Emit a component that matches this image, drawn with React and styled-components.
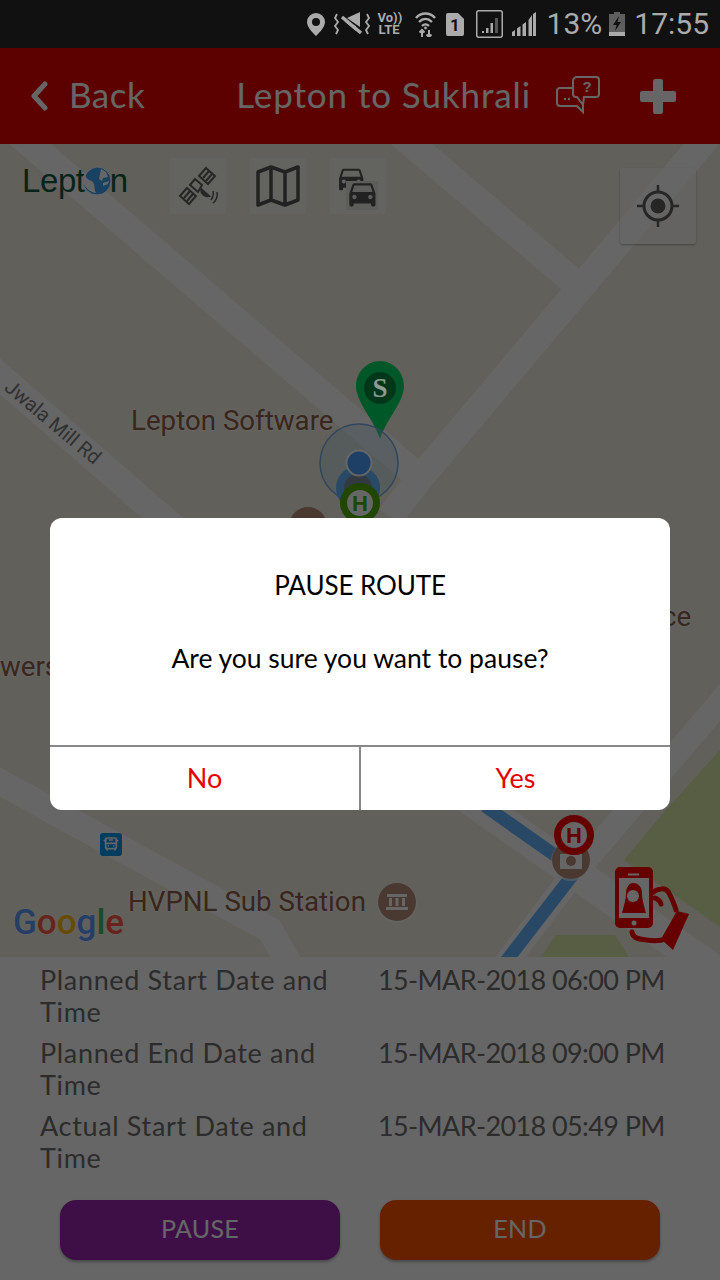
import React from 'react';
import styled, { createGlobalStyle } from 'styled-components';
import { BusFront } from 'lucide-react';

const UI_FONT = `"Lato", "Open Sans", sans-serif`;
const MAP_FONT = `"Roboto", sans-serif`;

const Global = createGlobalStyle`
  html, body { margin: 0; padding: 0; background: #fff; }
  #root { width: 720px; height: 1280px; }
  * { box-sizing: border-box; }
`;

const Phone = styled.div`
  width: 720px; height: 1280px; display: flex; flex-direction: column;
  overflow: hidden; font-family: ${UI_FONT};
`;

/* ---------- status bar ---------- */
const StatusBar = styled.div`
  height: 48px; flex: none; background: #111; color: #ababab;
  display: flex; align-items: center; justify-content: flex-end; padding-right: 11px;
`;
const StatusItem = styled.div`
  margin-left: ${p => p.$gap}px; display: flex; align-items: center;
  svg { display: block; }
`;
const StatusText = styled.span`
  font-family: ${MAP_FONT}; font-size: 30px; line-height: 48px; margin-left: ${p => p.$gap}px;
`;
const VoLte = styled.div`
  width: 23px; margin-left: 8px; text-align: center; white-space: pre-line;
  font-family: ${MAP_FONT}; font-weight: 700; font-size: 13px; line-height: 12px; color: #ababab;
`;

/* ---------- body under dim ---------- */
const Content = styled.div`
  position: relative; flex: 1; display: flex; flex-direction: column; min-height: 0;
`;

const Header = styled.header`
  height: 96px; flex: none; background: #e60000; color: #fff;
  display: flex; align-items: center; padding-left: 30px;
`;
const BackLabel = styled.span`font-size: 35px; margin-left: 21px; letter-spacing: .5px; padding-bottom: 4px;`;
const HeaderTitle = styled.h1`
  font-size: 35px; font-weight: 400; margin: 0 0 0 91px; padding-bottom: 4px; letter-spacing: .9px; white-space: nowrap;
`;
const ChatIcon = styled.svg`margin-left: 25px; flex: none;`;
const PlusIcon = styled.svg`margin-left: 40px; flex: none;`;

/* ---------- map ---------- */
const MapArea = styled.div`
  position: relative; height: 813px; flex: none; background: #f3f0e2; overflow: hidden;
`;
const Roads = styled.svg`position: absolute; left: 0; top: 0;`;
const LogoMark = styled.div`
  position: absolute; left: 22px; top: 18px; display: flex; align-items: center;
  font-family: "Liberation Sans", sans-serif; font-size: 33px; color: #0f5a45; letter-spacing: -.4px;
`;
const LogoGlobe = styled.svg`margin: 0 -2px 0 -3px; flex: none;`;
const Toolbar = styled.div`
  position: absolute; left: 170px; top: 14px; display: flex; gap: 24px;
`;
const ToolButton = styled.div`
  width: 56px; height: 56px; background: rgba(255,255,255,.45);
  display: flex; align-items: center; justify-content: center;
`;
const LocateButton = styled.div`
  position: absolute; left: 620px; top: 24px; width: 76px; height: 76px; border-radius: 3px;
  background: rgba(255,255,255,.55); box-shadow: 0 1px 2px rgba(0,0,0,.3);
  display: flex; align-items: center; justify-content: center;
`;
const PlaceLabel = styled.span`
  position: absolute; left: ${p => p.$x}px; top: ${p => p.$y}px;
  font-family: ${MAP_FONT}; font-size: 27.7px; line-height: 34px; color: #8f5f48; white-space: nowrap;
  text-shadow: 0 0 3px #fff, 0 0 3px #fff;
`;
const RoadLabel = styled.span`
  position: absolute; left: -10px; top: 266px; width: 126px; text-align: center;
  transform: rotate(40deg); font-family: ${MAP_FONT}; font-size: 20px; line-height: 24px;
  color: #7c7c7c; white-space: nowrap;
`;
const Marker = styled.svg`position: absolute; left: ${p => p.$x}px; top: ${p => p.$y}px;`;
const PinLetter = styled.span`
  position: absolute; left: 369px; top: 228px; width: 22px; text-align: center; z-index: 3;
  font-family: "Liberation Serif", serif; font-weight: 700; font-size: 27px; line-height: 32px; color: #8f9a90;
`;
const GoogleMark = styled.div`
  position: absolute; left: 13px; top: 755px; font-family: ${MAP_FONT}; font-size: 35px; line-height: 48px;
  font-weight: 500; display: flex; text-shadow: 0 0 2px #fff;
`;
const GoogleLetter = styled.span`color: ${p => p.$c};`;

/* ---------- details ---------- */
const Details = styled.section`
  flex: 1; background: #fff; padding: 7px 0 0 40px; display: flex; flex-direction: column; gap: 9px;
`;
const DetailRow = styled.div`
  display: grid; grid-template-columns: 338px 1fr; font-size: 27px; line-height: 32px; color: #6e6e6e;
`;
const DetailLabel = styled.div`padding-right: 4px; letter-spacing: .66px;`;
const DetailValue = styled.div`white-space: nowrap; letter-spacing: -.6px;`;
const Actions = styled.div`
  display: flex; justify-content: center; gap: 40px; margin: 17px 0 0 -40px;
`;
const ActionButton = styled.div`
  width: 280px; height: 60px; border-radius: 16px; background: ${p => p.$bg}; color: #fff;
  box-shadow: 0 2px 3px rgba(0,0,0,.3); padding-bottom: 4px;
  font-size: 25px; display: flex; align-items: center; justify-content: center; letter-spacing: .3px;
`;

/* ---------- dialog ---------- */
const Dim = styled.div`
  position: absolute; inset: 0; background: rgba(0,0,0,.6); z-index: 2;
  display: flex; align-items: center; justify-content: center;
`;
const Dialog = styled.div`
  width: 620px; height: 292px; background: #fff; border-radius: 12px; overflow: hidden;
  display: flex; flex-direction: column; color: #000; text-align: center;
`;
const DialogBody = styled.div`flex: 1; padding-top: 49px;`;
const DialogTitle = styled.div`font-size: 26px; line-height: 36px; letter-spacing: -.1px;`;
const DialogMessage = styled.div`font-size: 26.5px; line-height: 36px; margin-top: 37px;`;
const DialogActions = styled.div`
  height: 65px; flex: none; border-top: 2px solid #888; display: flex;
`;
const DialogButton = styled.div`
  flex: 1 0 0; color: #e60000; font-size: 27px; padding-bottom: 3px;
  display: flex; align-items: center; justify-content: center;
  border-left: ${p => (p.$split ? '2px solid #888' : 'none')};
`;

const DETAILS = [
  ['Planned Start Date and Time', '15-MAR-2018 06:00 PM'],
  ['Planned End Date and Time', '15-MAR-2018 09:00 PM'],
  ['Actual Start Date and Time', '15-MAR-2018 05:49 PM'],
];

const Car = ({ x, y, s }) => (
  <g transform={`translate(${x} ${y}) scale(${s})`}>
    <path d="M18.92 6.01C18.72 5.42 18.16 5 17.5 5h-11c-.66 0-1.21.42-1.42 1.01L3 12v8c0 .55.45 1 1 1h1c.55 0 1-.45 1-1v-1h12v1c0 .55.45 1 1 1h1c.55 0 1-.45 1-1v-8l-2.08-5.99zM6.5 16c-.83 0-1.5-.67-1.5-1.5S5.67 13 6.5 13s1.5.67 1.5 1.5S7.33 16 6.5 16zm11 0c-.83 0-1.5-.67-1.5-1.5s.67-1.5 1.5-1.5 1.5.67 1.5 1.5-.67 1.5-1.5 1.5zM5 11l1.5-4.5h11L19 11H5z" />
  </g>
);

const HPin = ({ x, y, color }) => (
  <Marker $x={x} $y={y} width="44" height="44" viewBox="0 0 44 44">
    <circle cx="22" cy="22" r="16.5" fill="#fff" stroke={color} strokeWidth="7" />
    <text x="22" y="30" textAnchor="middle" fontFamily="Liberation Sans" fontWeight="700" fontSize="22" fill={color}>H</text>
  </Marker>
);

const PoiCircle = ({ x, y, children }) => (
  <Marker $x={x} $y={y} width="44" height="44" viewBox="0 0 44 44">
    <circle cx="22" cy="23" r="20" fill="#fff" opacity=".6" />
    <circle cx="22" cy="22" r="19" fill="#b88f7c" />
    {children}
  </Marker>
);

export default function App() {
  return (
    <Phone>
      <Global />
      <StatusBar>
        <StatusItem $gap={0}>
          <svg width="18" height="23" viewBox="0 0 18 23" fill="currentColor">
            <path fillRule="evenodd" d="M9 0a9 9 0 0 1 9 9c0 5-5 10-9 14C5 19 0 14 0 9a9 9 0 0 1 9-9zm0 5a4 4 0 1 0 0 8 4 4 0 0 0 0-8z" />
          </svg>
        </StatusItem>
        <StatusItem $gap={9}>
          <svg width="36" height="24" viewBox="0 0 36 24" fill="none" stroke="currentColor">
            <path d="M13 6l13-6v15z" fill="currentColor" stroke="none" />
            <path d="M8 5l19 16" strokeWidth="3.5" />
            <path d="M10 9l12 10v-5z" fill="currentColor" stroke="none" />
            <path d="M3 2L1 6l3 4-3 4 3 4-2 4M33 2l2 4-3 4 3 4-3 4 2 4" strokeWidth="1.8" />
          </svg>
        </StatusItem>
        <VoLte>{'Vo))\nLTE'}</VoLte>
        <StatusItem $gap={14}>
          <svg width="21" height="25" viewBox="0 0 21 25" fill="none" stroke="currentColor" strokeWidth="2.4">
            <path d="M1 6c5-6 14-6 19 0M4 10c4-4 9-4 13 0M7 14c2-2 5-2 7 0" />
            <circle cx="10.5" cy="16" r="1.4" fill="currentColor" stroke="none" />
            <path d="M7 25v-7M4.5 20.500L7 18l2.500 2.500M14 18v7M11.500 22.500L14 25l2.500-2.500" strokeWidth="2" />
          </svg>
        </StatusItem>
        <StatusItem $gap={10}>
          <svg width="18" height="23" viewBox="0 0 18 23">
            <path d="M2 0h10l6 6v15a2 2 0 0 1-2 2H2a2 2 0 0 1-2-2V2a2 2 0 0 1 2-2z" fill="currentColor" />
            <text x="9" y="18" textAnchor="middle" fontFamily="Roboto" fontWeight="700" fontSize="17" fill="#111">1</text>
          </svg>
        </StatusItem>
        <StatusItem $gap={12}>
          <svg width="27" height="28" viewBox="0 0 27 28" fill="currentColor">
            <rect x=".75" y=".75" width="25.500" height="26.500" rx="2" fill="none" stroke="currentColor" strokeWidth="1.500" />
            <path d="M6 21h2v2H6zM10 18h2.500v5H10zM14.500 13H17v10h-2.500z" />
            <path d="M19 8h3v15h-3z" opacity=".45" />
          </svg>
        </StatusItem>
        <StatusItem $gap={9}>
          <svg width="24" height="24" viewBox="0 0 24 24" fill="currentColor">
            <path d="M0 20l3-2v6H0zM5 16.500l3.500-2.500v10H5zM10.500 12.500L14 10v14h-3.500zM16.500 8L20 3v21h-3.500zM21 2l3-2v24h-3z" />
          </svg>
        </StatusItem>
        <StatusText $gap={11}>13%</StatusText>
        <StatusItem $gap={7}>
          <svg width="16" height="24" viewBox="0 0 16 24" fill="currentColor">
            <path d="M5 0h6v2h5v22H0V2h5z" opacity=".5" />
            <path d="M0 20h16v4H0z" />
            <path d="M10 4L4 13h3.500L6 19l6-9H8.500z" fill="#111" />
          </svg>
        </StatusItem>
        <StatusText $gap={9}>17:55</StatusText>
      </StatusBar>

      <Content>
        <Header>
          <svg width="18" height="30" viewBox="0 0 18 30" fill="none" stroke="#fff" strokeWidth="5" strokeLinecap="round" strokeLinejoin="round">
            <path d="M15 3L4 15l11 12" />
          </svg>
          <BackLabel>Back</BackLabel>
          <HeaderTitle>Lepton to Sukhrali</HeaderTitle>
          <ChatIcon width="44" height="40" viewBox="0 0 44 40" fill="none" stroke="#fff" strokeWidth="2">
            <path d="M17 12H4a3 3 0 0 0-3 3v12a3 3 0 0 0 3 3h17l6 6 0-10" />
            <path d="M17 5a4 4 0 0 1 4-4h19a3 3 0 0 1 3 3v14a3 3 0 0 1-3 3H28l-1 8-6-8h-1a3 3 0 0 1-3-3z" fill="#e60000" />
            <text x="31" y="16" textAnchor="middle" fontFamily="Liberation Sans" fontWeight="700" fontSize="15" fill="#fff" stroke="none">?</text>
            <circle cx="9" cy="23" r="1.200" fill="#fff" stroke="none" />
            <circle cx="13" cy="23" r="1.200" fill="#fff" stroke="none" />
          </ChatIcon>
          <PlusIcon width="36" height="35" viewBox="0 0 36 35" fill="#fff">
            <path d="M13 2a2 2 0 0 1 2-2h6a2 2 0 0 1 2 2v10h11a2 2 0 0 1 2 2v7a2 2 0 0 1-2 2H23v10a2 2 0 0 1-2 2h-6a2 2 0 0 1-2-2V23H2a2 2 0 0 1-2-2v-7a2 2 0 0 1 2-2h11z" />
          </PlusIcon>
        </Header>

        <MapArea>
          <Roads width="720" height="813" viewBox="0 0 720 813" fill="none">
            <path d="M720 606L666 666L624 716L720 783z" fill="#dcebaa" />
            <path d="M556 791H615L629 813H541z" fill="#dcebaa" />
            <g stroke="#fff" strokeWidth="27">
              <path d="M-40 -60L420 334" />
              <path d="M341 -60L576 140" />
              <path d="M752 -60L420 334L390 373" />
              <path d="M-60 180L220 424" />
              <path d="M-60 605L60 671L270 786L295 830" strokeWidth="26" />
              <path d="M780 488L625 670L569 736L490 840" strokeWidth="24" />
              <path d="M460 648L760 859" strokeWidth="32" />
            </g>
            <g stroke="#65b4ff" strokeWidth="13">
              <path d="M485 662L556 712" />
              <path d="M575 728L490 838" />
            </g>
          </Roads>

          <LogoMark>
            <span>Lept</span>
            <LogoGlobe width="30" height="30" viewBox="0 0 30 30">
              <circle cx="15" cy="15" r="14" fill="#3fa5f5" stroke="#fff" strokeWidth="1" />
              <path d="M13 2c-5 1-10 6-9 9 2 4 7 3 8 7 1 3 0 6 2 9-6-1-12-5-13-12C0 8 6 2 13 2zM19 3l5 3 2 5-5 1-1 3-3-2zM21 17l6-2-1 3-5 2z" fill="#fff" />
            </LogoGlobe>
            <span>n</span>
          </LogoMark>

          <Toolbar>
            <ToolButton>
              <svg width="44" height="44" viewBox="0 0 44 44" fill="none" stroke="#606060" strokeWidth="2">
                <path d="M30 4l9 8-7 8-9-8zM33 7l-6 7M36 10l-6 7" />
                <path d="M11 24l9 8-7 8-9-8zM14 27l-6 7M17 30l-6 7" />
                <path d="M19 15l7 6-4 7-8-7z" />
                <path d="M25 25c0 5 4 8 8 7z" fill="#606060" />
                <path d="M37 27c1 3 0 6-2 9M41 28c1 4-1 9-4 11" strokeWidth="1.500" />
              </svg>
            </ToolButton>
            <ToolButton>
              <svg width="44" height="44" viewBox="0 0 44 44" fill="none" stroke="#555" strokeWidth="3.500" strokeLinejoin="round">
                <path d="M2 8l13-5 14 5 13-5v33l-13 5-14-5-13 5zM15 3v33M29 8v33" />
              </svg>
            </ToolButton>
            <ToolButton>
              <svg width="46" height="48" viewBox="0 0 46 48" fill="#555">
                <Car x={0} y={0} s={1.35} />
                <path d="M11 19h32v29H11z" fill="#e9e9e5" />
                <Car x={10} y={14} s={1.45} />
              </svg>
            </ToolButton>
          </Toolbar>

          <LocateButton>
            <svg width="44" height="44" viewBox="0 0 44 44" fill="none" stroke="#606060" strokeWidth="3">
              <circle cx="22" cy="22" r="14" />
              <circle cx="22" cy="22" r="7.500" fill="#606060" stroke="none" />
              <path d="M22 1v8M22 35v8M1 22h8M35 22h8" strokeWidth="2.500" />
            </svg>
          </LocateButton>

          <PlaceLabel $x={131} $y={260}>Lepton Software</PlaceLabel>
          <PlaceLabel $x={128} $y={741}>HVPNL Sub Station</PlaceLabel>
          <PlaceLabel $x={0} $y={506}>wers</PlaceLabel>
          <PlaceLabel $x={662} $y={456}>ce</PlaceLabel>
          <RoadLabel>Jwala Mill Rd</RoadLabel>

          <Marker $x={356} $y={217} width="48" height="78" viewBox="0 0 48 78">
            <path d="M24 0c13 0 24 11 24 25 0 16-17 32-24 53C17 57 0 41 0 25 0 11 11 0 24 0z" fill="#00dd66" />
            <circle cx="24" cy="27" r="16" fill="#008a40" />
          </Marker>
          <PinLetter>S</PinLetter>

          <Marker $x={319} $y={279} width="80" height="80" viewBox="0 0 80 80">
            <circle cx="40" cy="40" r="39" fill="#a5cff0" fillOpacity=".35" stroke="#7bb0e0" strokeWidth="1.500" />
          </Marker>
          <Marker $x={335} $y={321} width="46" height="46" viewBox="0 0 46 46">
            <circle cx="23" cy="23" r="18" fill="#8090a0" stroke="#64b8ff" strokeWidth="8" />
          </Marker>
          <PoiCircle x={286} y={360} />
          <HPin x={338} y={337} color="#50b000" />
          <Marker $x={345} $y={305} width="28" height="28" viewBox="0 0 28 28">
            <circle cx="14" cy="14" r="12.500" fill="#4c9fff" stroke="#fff" strokeWidth="2" />
          </Marker>

          <PoiCircle x={375} y={736}>
            <path d="M12 14h20v3H12zM14 18h3v8h-3zM20.500 18h3v8h-3zM27 18h3v8h-3zM11 27h22v3H11z" fill="#fff" />
          </PoiCircle>
          <PoiCircle x={549} y={694}>
            <path d="M11 16h5l2-3h8l2 3h5v15H11z" fill="#fff" />
            <circle cx="22" cy="23" r="5" fill="#b88f7c" />
          </PoiCircle>
          <HPin x={552} y={669} color="#ff0000" />

          <Marker $x={100} $y={689} width="22" height="23" viewBox="0 0 22 23">
            <rect width="22" height="23" rx="3" fill="#0099ee" />
          </Marker>
          <Marker as={BusFront} $x={103} $y={692} size={16} color="#fff" strokeWidth={2.500} />

          <Marker $x={590} $y={706} width="110" height="110" viewBox="0 0 110 110">
            <rect x="28" y="27" width="32" height="42" fill="#fff" />
            <path fillRule="evenodd" fill="#ff0000" d="M30 17h28a5 5 0 0 1 5 5v51a5 5 0 0 1-5 5H30a5 5 0 0 1-5-5V22a5 5 0 0 1 5-5zM29 28v40h30V28z" />
            <path fill="#ff0000" d="M43 33c6 0 9 5 9 10 0 5 1 9 4 20H32c3-11 4-15 4-20 0-5 3-10 7-10z" />
            <circle cx="43" cy="46" r="6" fill="#fff" />
            <circle cx="44" cy="73" r="2.500" fill="#fff" />
            <path d="M38 24.500h11" stroke="#fff" strokeWidth="2" />
            <path fill="#ff0000" d="M87 61L99 64L83 100L71 89z" />
            <path fill="none" stroke="#ff0000" strokeWidth="5" d="M62 43c6-5 14-6 17 0 2 4 5 10 7 17M65 48c2 1 5 2 6 6M42 82c1 6 6 7 14 8 7 1 11 1 16 0" strokeLinecap="round" />
          </Marker>

          <GoogleMark>
            <GoogleLetter $c="#5a9cff">G</GoogleLetter>
            <GoogleLetter $c="#ff5a4a">o</GoogleLetter>
            <GoogleLetter $c="#ffbb00">o</GoogleLetter>
            <GoogleLetter $c="#5a9cff">g</GoogleLetter>
            <GoogleLetter $c="#44bb66">l</GoogleLetter>
            <GoogleLetter $c="#ff5a4a">e</GoogleLetter>
          </GoogleMark>
        </MapArea>

        <Details>
          {DETAILS.map(([label, value]) => (
            <DetailRow key={label}>
              <DetailLabel>{label}</DetailLabel>
              <DetailValue>{value}</DetailValue>
            </DetailRow>
          ))}
          <Actions>
            <ActionButton $bg="#9c27b0">PAUSE</ActionButton>
            <ActionButton $bg="#ff5500">END</ActionButton>
          </Actions>
        </Details>

        <Dim>
          <Dialog>
            <DialogBody>
              <DialogTitle>PAUSE ROUTE</DialogTitle>
              <DialogMessage>Are you sure you want to pause?</DialogMessage>
            </DialogBody>
            <DialogActions>
              <DialogButton>No</DialogButton>
              <DialogButton $split>Yes</DialogButton>
            </DialogActions>
          </Dialog>
        </Dim>
      </Content>
    </Phone>
  );
}
